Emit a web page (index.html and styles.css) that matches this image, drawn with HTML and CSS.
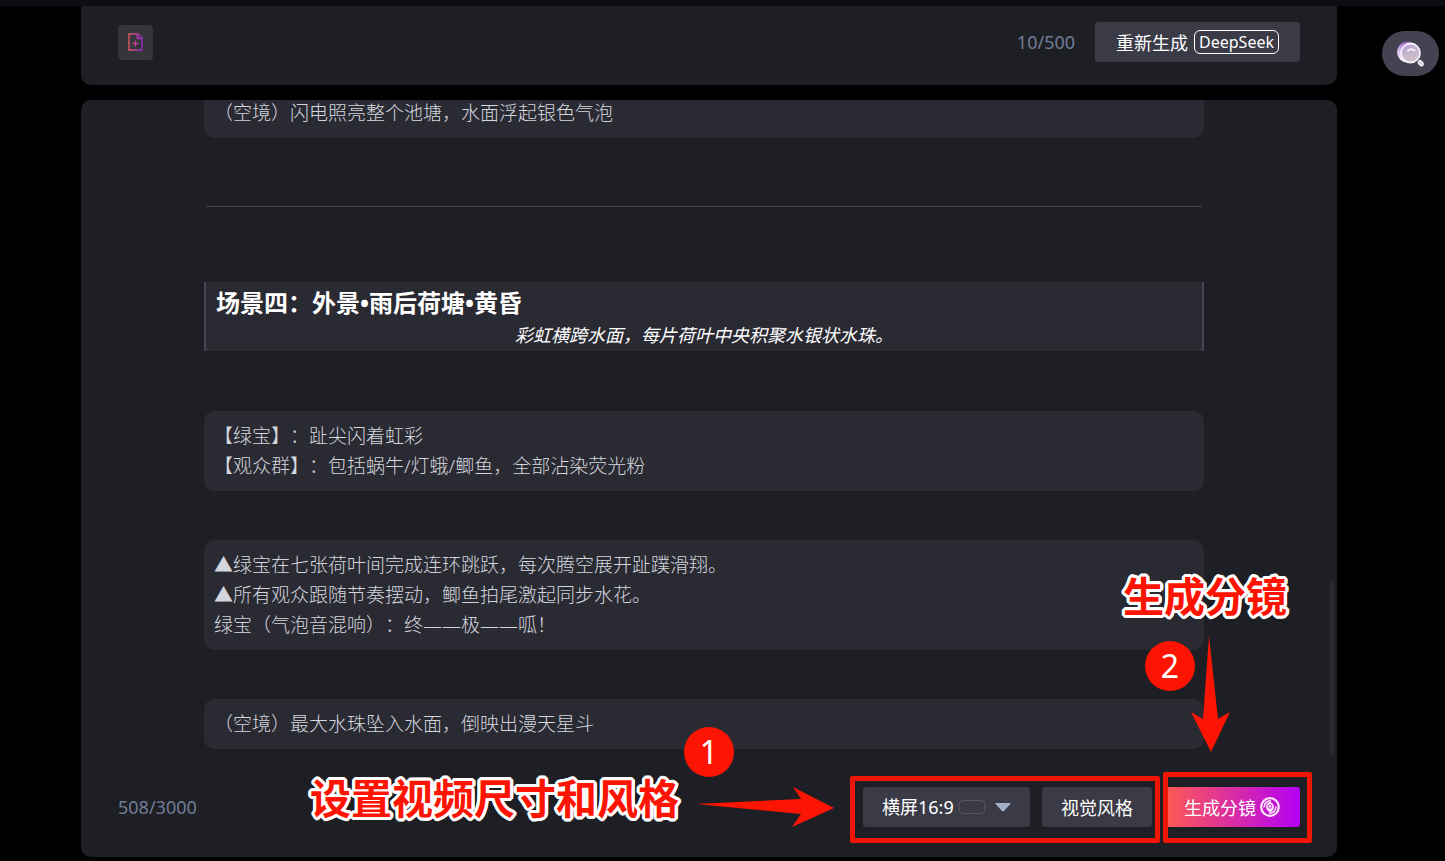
FILE: index.html
```html
<!DOCTYPE html>
<html lang="zh-CN">
  <head>
    <meta charset="UTF-8" />
    <meta name="viewport" content="width=device-width, initial-scale=1.0" />
    <title>生成分镜</title>
    <link rel="stylesheet" href="styles.css">
  </head>
  <body>
    <header class="topbar"></header>
    <main class="page">
      <section class="card prompt">
        <button class="btn-file" type="button" aria-label="导入文件">
          <svg width="15" height="18" viewBox="0 0 15 18" fill="none" stroke="url(#g1)">
            <defs>
              <linearGradient id="g1" gradientUnits="userSpaceOnUse" x1="0" y1="0" x2="15" y2="0">
                <stop offset="0" stop-color="#e8605c" />
                <stop offset="1" stop-color="#9a1fd0" />
              </linearGradient>
            </defs>
            <path d="M1 1h9l4 4v12H1z" stroke-width="1.3" />
            <path d="M9.5 1v4.5H14" stroke-width="1.6" />
            <path d="M7.5 7.500v6M4.500 10.500h6" stroke-width="1.3" />
          </svg>
        </button>
        <div class="right">
          <span class="count">10/500</span>
          <button class="btn btn-regen" type="button">重新生成<span class="tag">DeepSeek</span></button>
        </div>
      </section>

      <section class="card result">
        <div class="scroll">
          <article class="script">
            <p class="block first">（空境）闪电照亮整个池塘，水面浮起银色气泡</p>
            <hr class="line" />
            <div class="scene">
              <h2>场景四：外景•雨后荷塘•黄昏</h2>
              <em>彩虹横跨水面，每片荷叶中央积聚水银状水珠。</em>
            </div>
            <p class="block">【绿宝】：趾尖闪着虹彩<br />【观众群】：包括蜗牛/灯蛾/鲫鱼，全部沾染荧光粉</p>
            <p class="block">▲绿宝在七张荷叶间完成连环跳跃，每次腾空展开趾蹼滑翔。<br />▲所有观众跟随节奏摆动，鲫鱼拍尾激起同步水花。<br />绿宝（气泡音混响）：终——极——呱！</p>
            <p class="block">（空境）最大水珠坠入水面，倒映出漫天星斗</p>
          </article>
          <span class="thumb"></span>
        </div>
        <footer class="foot">
          <span class="count">508/3000</span>
          <div class="actions">
            <div class="group">
              <div class="ratio">
                <select aria-label="视频尺寸">
                  <option>横屏16:9</option>
                </select>
                <svg width="54" height="16" viewBox="0 0 54 16">
                  <rect x="1" y="1.500" width="26" height="13" rx="4" fill="none" stroke="#555863" />
                  <path d="M38 4h14q1.200 0 .4 1l-6.400 7q-1 .9-2 0l-6.400-7q-.8-1 .4-1z" fill="#a3b0c5" />
                </svg>
              </div>
              <button class="btn btn-style" type="button">视觉风格</button>
              <span class="frame frame1"></span>
            </div>
            <div class="group">
              <button class="btn btn-make" type="button">生成分镜
                <svg width="20" height="20" viewBox="0 0 20 20" fill="none" stroke="#fbe6fb">
                  <circle cx="10" cy="10" r="8.800" stroke-width="2.200" />
                  <path d="M4 10.500C4.200 6.500 7 4 11 3.800M16 9.500C15.800 13.500 13 16 9 16.200" stroke-width="1.600" />
                  <path d="M10 4.500C12.500 6 14 8 14 10s-1.500 4-4 5.500C7.500 14 6 12 6 10s1.500-4 4-5.500z" fill="#fbe6fb" stroke="none" />
                  <circle cx="10" cy="9.500" r="1.800" stroke="#c32ccb" stroke-width="1" />
                </svg>
              </button>
              <span class="frame frame2"></span>
            </div>
          </div>
        </footer>
      </section>
    </main>

    <button class="search" type="button" aria-label="搜索">
      <svg width="30" height="28" viewBox="0 0 30 28">
        <defs>
          <linearGradient id="g2" x1="0.300" y1="0" x2="0.200" y2="1">
            <stop offset="0" stop-color="#9a5fc4" />
            <stop offset="0.500" stop-color="#d9c4ee" />
            <stop offset="1" stop-color="#fff" />
          </linearGradient>
          <linearGradient id="g3" x1="0.200" y1="0" x2="0.500" y2="1">
            <stop offset="0" stop-color="#b9a3d2" />
            <stop offset="1" stop-color="#cfc3c6" />
          </linearGradient>
        </defs>
        <circle cx="11.500" cy="12" r="10.500" fill="url(#g2)" />
        <circle cx="14.500" cy="13" r="9.500" fill="url(#g3)" stroke="#f4effa" stroke-width="1.800" />
        <path d="M12 10.500q3-2.500 6.500 0" fill="none" stroke="#f4effa" stroke-width="2" stroke-linecap="round" />
        <path d="M24 22.500l1.500 1.500" stroke="#e9e8ee" stroke-width="5" stroke-linecap="round" />
        <path d="M24 22.500l1.500 1.500" stroke="#a9a7b5" stroke-width="1" stroke-linecap="round" />
      </svg>
    </button>

    <!-- 标注 -->
    <strong class="note note1">设置视频尺寸和风格</strong>
    <span class="num num1">1</span>
    <svg class="arrow arrow1" width="138" height="40" viewBox="0 0 138 40">
      <path d="M0 17L105 12L97 0L138 21L96 40L105 27Z" fill="#fe1402" />
    </svg>
    <strong class="note note2">生成分镜</strong>
    <span class="num num2">2</span>
    <svg class="arrow arrow2" width="40" height="116" viewBox="0 0 40 116">
      <path d="M19 0L28 83L40 76L21 116L1 76L13 83Z" fill="#fe1402" />
    </svg>
  </body>
</html>
```
FILE: styles.css
```css
* {
  box-sizing: border-box;
}
body {
  position: relative;
  display: flex;
  flex-direction: column;
  min-height: 100vh;
  margin: 0;
  background-color: #000;
  color: #fff;
  font-family: "Noto Sans", "Noto Sans CJK SC", sans-serif;
  font-size: 18px;
  text-spacing-trim: space-all;
}
button,
select {
  border: none;
  color: inherit;
  font: inherit;
  cursor: pointer;
}
.topbar {
  height: 6px;
  background-color: #0d0d12;
}
.page {
  display: flex;
  flex: 1;
  flex-direction: column;
  gap: 15px;
  padding: 0 108px 4px 81px;
}
.card {
  border-radius: 10px;
  background-color: #1e1f24;
}
.count {
  color: #727c98;
}

/* 顶部输入区 */
.prompt {
  display: flex;
  align-items: center;
  justify-content: space-between;
  padding: 16px 37px 23px;
  border-radius: 0 0 10px 10px;
}
.btn-file {
  display: flex;
  align-items: center;
  justify-content: center;
  width: 35px;
  height: 35px;
  padding: 0;
  border-radius: 4px;
  background-color: #35363b;
}
.right {
  display: flex;
  align-items: center;
  gap: 20px;
}
.btn {
  display: flex;
  align-items: center;
  justify-content: center;
  height: 40px;
  padding: 0 19px;
  border-radius: 3px;
  background-color: #3b3b47;
  white-space: nowrap;
}
.btn-regen {
  gap: 6px;
  padding: 0 21px;
}
.tag {
  padding: 0 4px;
  border: 1px solid #fff;
  border-radius: 6px;
  font-size: 16px;
  line-height: 22px;
}

/* 剧本内容 */
.result {
  display: flex;
  flex: 1;
  flex-direction: column;
}
.scroll {
  position: relative;
  flex: 1;
  padding: 0 133px 0 123px;
  overflow: hidden;
  border-radius: 10px 10px 0 0;
}
.script {
  margin-top: -12px;
}
.block {
  margin: 49px 0 0;
  padding: 10px;
  border-radius: 10px;
  background-color: #2a2a33;
  color: #d4d6de;
  font-size: 19px;
  font-weight: 300;
  line-height: 30px;
}
.first {
  margin-top: 0;
}
.line {
  height: 1px;
  margin: 68px 2px 75px;
  border: none;
  background-color: #45464c;
}
.scene {
  margin-bottom: 60px;
  padding: 3px 10px 1px;
  border: solid #454553;
  border-width: 0 2px;
  background-color: #2a2a33;
}
.scene h2 {
  margin: 0;
  font-size: 24px;
  line-height: 36px;
}
.scene em {
  display: block;
  line-height: 29px;
  text-align: center;
}
.thumb {
  position: absolute;
  right: 3px;
  bottom: 33px;
  width: 4px;
  height: 172px;
  border-radius: 2px;
  background-color: #2a2a33;
}

/* 底部操作 */
.foot {
  display: flex;
  align-items: center;
  justify-content: space-between;
  padding: 0 37px 30px;
}
.actions,
.group {
  display: flex;
  gap: 12px;
}
.group {
  position: relative;
}
.ratio {
  display: grid;
  align-items: center;
  width: 167px;
  border-radius: 3px;
  background-color: #3b3b47;
}
.ratio select,
.ratio svg {
  grid-area: 1 / 1;
}
.ratio select {
  height: 40px;
  padding: 0 19px;
  appearance: none;
  background-color: transparent;
}
.ratio svg {
  justify-self: end;
  margin-right: 18px;
  pointer-events: none;
}
.btn-make {
  gap: 4px;
  padding: 0 20px;
  background: linear-gradient(90deg, #ff5b50, #b400f5);
}

/* 悬浮搜索 */
.search {
  position: absolute;
  top: 31px;
  right: 6px;
  display: flex;
  align-items: center;
  justify-content: center;
  width: 57px;
  height: 45px;
  padding: 0;
  border-radius: 23px;
  background-color: #424250;
}

/* 标注 */
.frame {
  position: absolute;
  border: 5px solid #f01505;
  border-radius: 2px;
  pointer-events: none;
}
.frame1 {
  inset: -11px -8px -16px -13px;
}
.frame2 {
  inset: -15px -12px -16px -1px;
}
.note {
  position: absolute;
  color: #fe1402;
  font-size: 41px;
  line-height: 50px;
  white-space: nowrap;
  text-shadow: 3px 0 #fff, -3px 0 #fff, 0 3px #fff, 0 -3px #fff,
    3px 1px #fff, 3px -1px #fff, -3px 1px #fff, -3px -1px #fff,
    1px 3px #fff, -1px 3px #fff, 1px -3px #fff, -1px -3px #fff,
    2px 2px #fff, -2px 2px #fff, 2px -2px #fff, -2px -2px #fff;
}
.note1 {
  right: 766px;
  bottom: 38px;
}
.note2 {
  right: 158px;
  bottom: 240px;
}
.num {
  position: absolute;
  width: 50px;
  height: 50px;
  border-radius: 50%;
  background-color: #fe1402;
  font-size: 32px;
  line-height: 50px;
  text-align: center;
}
.num1 {
  right: 711px;
  bottom: 84px;
}
.num2 {
  right: 250px;
  bottom: 170px;
}
.arrow {
  position: absolute;
}
.arrow1 {
  right: 611px;
  bottom: 34px;
}
.arrow2 {
  right: 215px;
  bottom: 109px;
}
```
